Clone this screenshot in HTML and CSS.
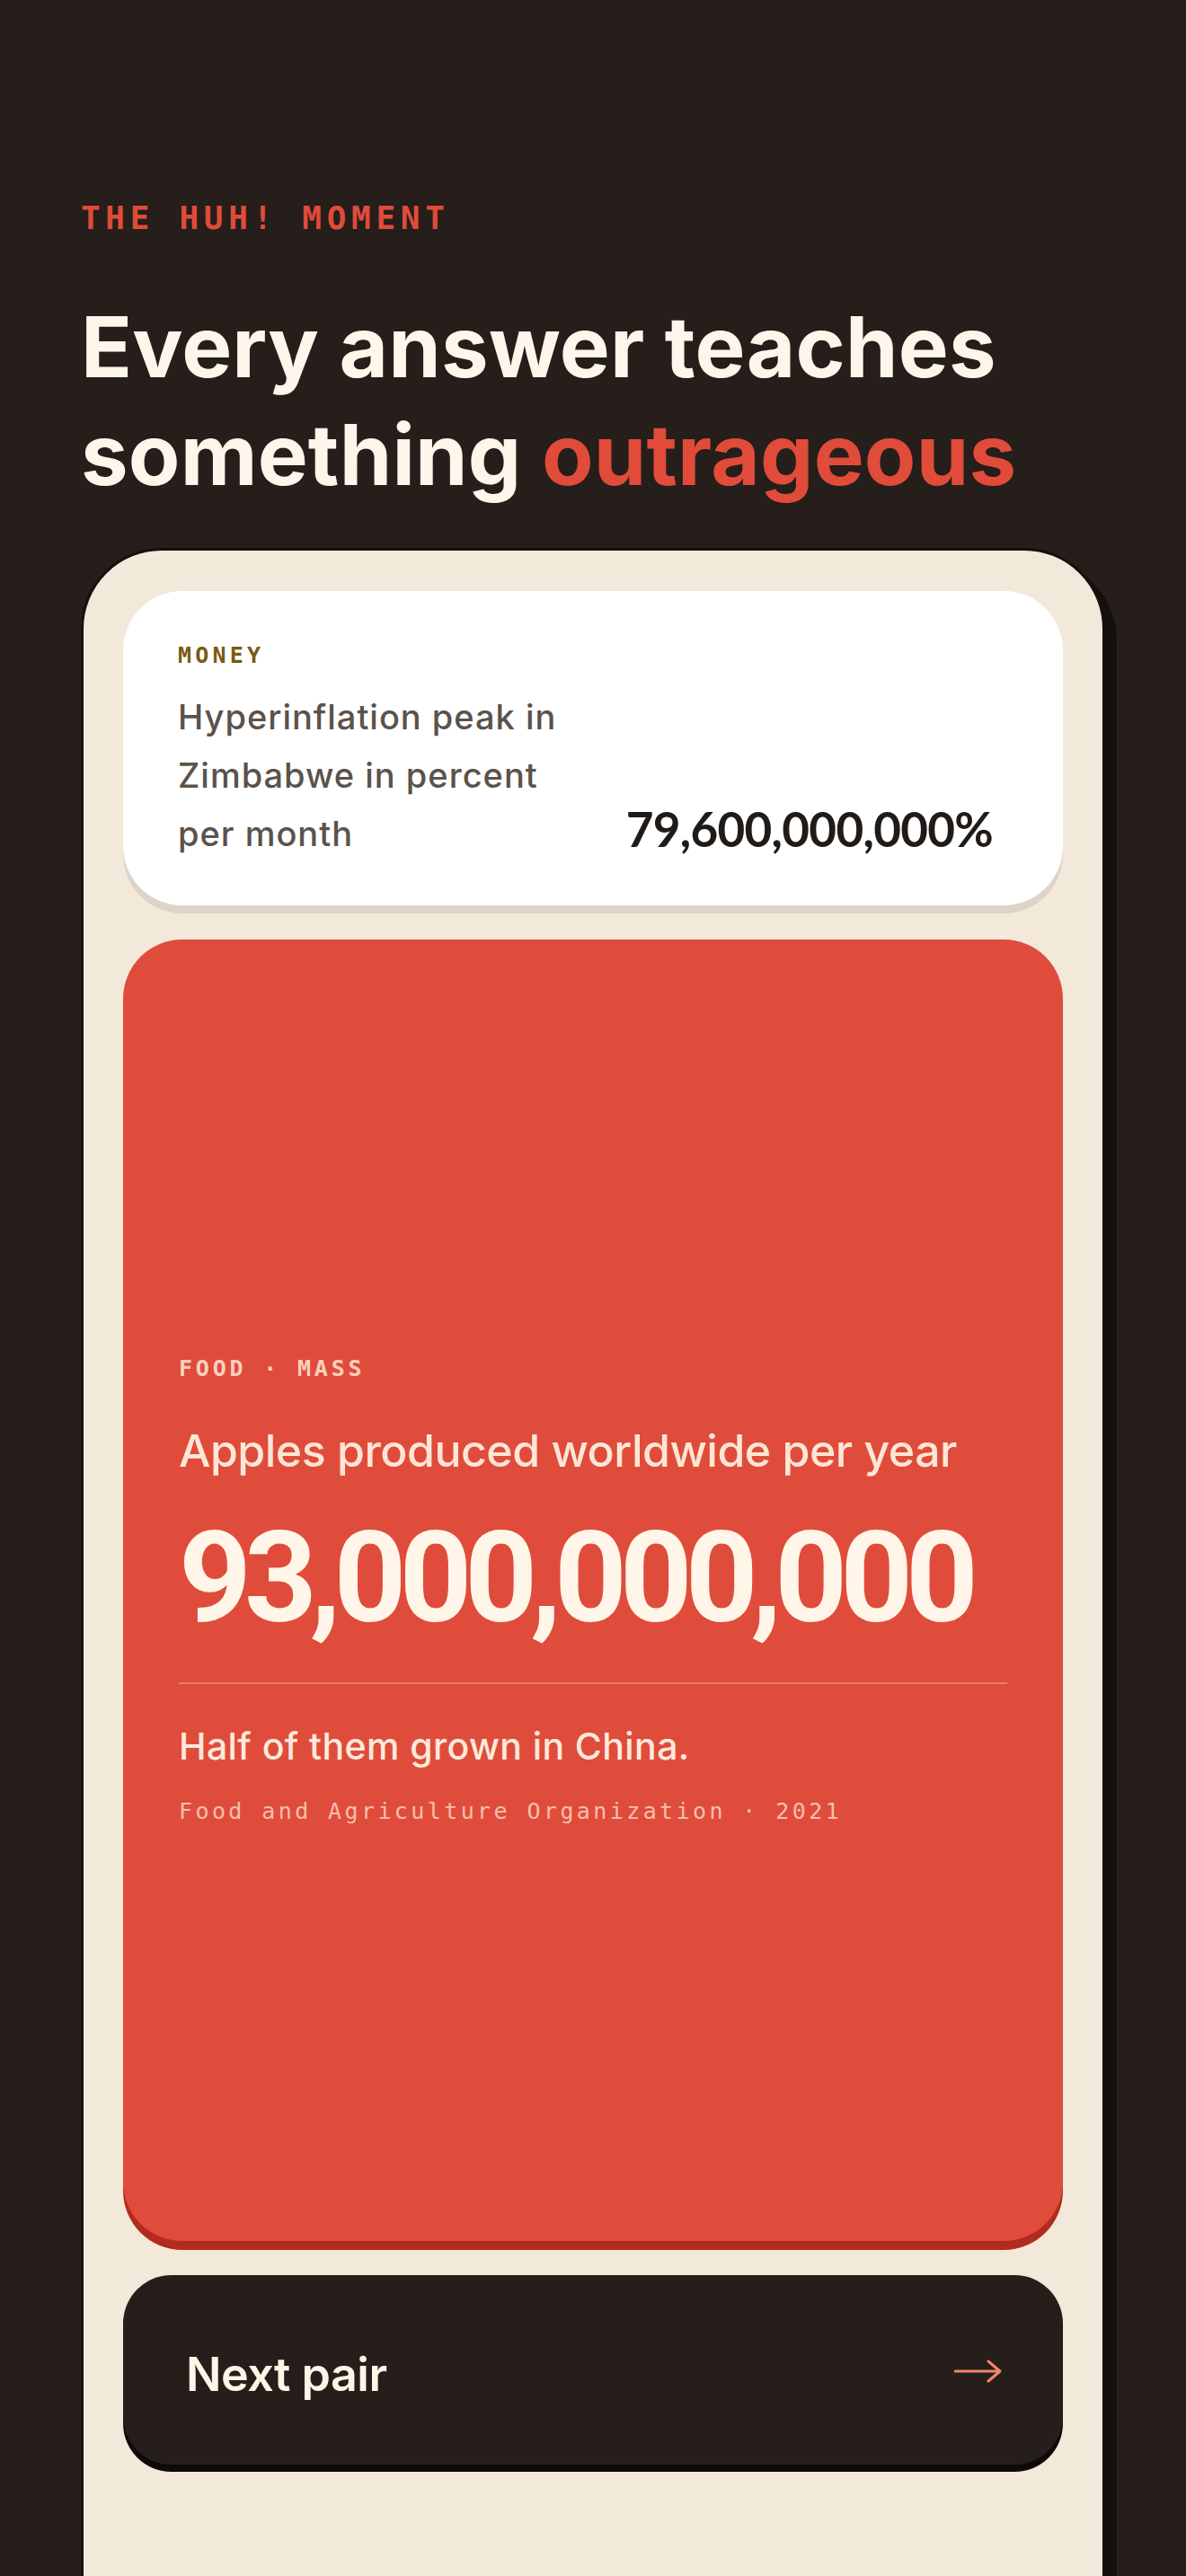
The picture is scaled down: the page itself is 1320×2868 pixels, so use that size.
FILE: index.html
```html
<!DOCTYPE html>
<html lang="en">
<head>
<meta charset="utf-8">
<title>The Huh! Moment</title>
<link rel="stylesheet" href="styles.css">
</head>
<body>
<main class="page">
  <header class="intro">
    <p class="eyebrow">THE HUH! MOMENT</p>
    <h1 class="headline">Every answer teaches<br>something <span class="accent">outrageous</span></h1>
  </header>

  <section class="device">
    <article class="fact-card compare">
      <p class="tag tag-money">MONEY</p>
      <div class="compare-row">
        <p class="compare-label">Hyperinflation peak in Zimbabwe in percent per month</p>
        <p class="compare-value">79,600,000,000%</p>
      </div>
    </article>

    <article class="fact-card hero">
      <p class="tag tag-hero">FOOD · MASS</p>
      <p class="hero-label">Apples produced worldwide per year</p>
      <p class="hero-value">93,000,000,000</p>
      <hr class="hero-rule">
      <p class="hero-note">Half of them grown in China.</p>
      <p class="hero-source">Food and Agriculture Organization · 2021</p>
    </article>

    <button class="next-btn" type="button">
      <span class="next-text">Next pair</span>
      <svg class="next-arrow" width="54" height="26" viewBox="0 0 54 26" aria-hidden="true">
        <path d="M1 13 H51 M38 2 L51 13 L38 24" fill="none" stroke="currentColor" stroke-width="3" stroke-linecap="round" stroke-linejoin="round"/>
      </svg>
    </button>
  </section>
</main>
</body>
</html>
```

FILE: styles.css
```css
html, body {
  margin: 0;
  padding: 0;
  background: #251e1a;
}

body {
  font-family: "Inter", "Liberation Sans", sans-serif;
  color: #fdf6ea;
}

p, h1 {
  margin: 0;
}

.page {
  height: 100vh;
  overflow: hidden;
  padding: 225px 90px 0;
  box-sizing: border-box;
}

.eyebrow {
  font-family: "DejaVu Sans Mono", "Liberation Mono", monospace;
  font-weight: 700;
  font-size: 36px;
  line-height: 36px;
  letter-spacing: 5.7px;
  color: #e04b3a;
}

.headline {
  margin-top: 65px;
  font-size: 94px;
  line-height: 120px;
  font-weight: 700;
  letter-spacing: 0.2px;
  color: #fdf6ea;
}

.accent {
  color: #e04b3a;
}

.device {
  margin-top: 44px;
  background: #f3e9da;
  border: 3px solid #15100c;
  border-radius: 90px;
  box-shadow: 13px 13px 0 #15100c;
  padding: 45px 44px 300px;
  display: flex;
  flex-direction: column;
  gap: 38px;
}

.fact-card {
  border-radius: 66px;
}

.compare {
  background: #ffffff;
  box-shadow: 0 9px 0 #ddd4c7;
  padding: 57px 78px 47px 61px;
}

.tag {
  font-family: "DejaVu Sans Mono", "Liberation Mono", monospace;
  font-weight: 700;
  font-size: 25px;
  line-height: 30px;
  letter-spacing: 4.2px;
}

.tag-money {
  color: #7a5a12;
}

.compare-row {
  margin-top: 21px;
  display: flex;
  justify-content: space-between;
  align-items: flex-end;
}

.compare-label {
  width: 440px;
  font-size: 38px;
  line-height: 65px;
  font-weight: 500;
  letter-spacing: 1px;
  color: #5b524b;
}

.compare-value {
  margin-bottom: 6px;
  font-family: "Lato", "Liberation Sans", sans-serif;
  font-weight: 700;
  font-size: 53px;
  line-height: 64px;
  letter-spacing: -0.7px;
  color: #211b17;
}

.hero {
  background: #e04c3b;
  box-shadow: 0 10px 0 #b22b1f;
  height: 1449px;
  box-sizing: border-box;
  padding: 0 62px;
  display: flex;
  flex-direction: column;
  justify-content: center;
}

.tag-hero {
  color: #f9d0bd;
  letter-spacing: 3.8px;
}

.hero-label {
  margin-top: 46px;
  font-size: 50px;
  line-height: 60px;
  font-weight: 500;
  letter-spacing: -0.5px;
  color: #fde6d6;
}

.hero-value {
  margin-top: 37px;
  font-family: "Roboto", "Inter", sans-serif;
  font-size: 141px;
  line-height: 150px;
  font-weight: 700;
  letter-spacing: -8px;
  color: #fff6e9;
}

.hero-rule {
  margin: 41px 0 0;
  border: 0;
  height: 2px;
  background: #ec7b6a;
}

.hero-note {
  margin-top: 44px;
  font-size: 41px;
  line-height: 50px;
  font-weight: 500;
  letter-spacing: 0.4px;
  color: #fdeadb;
}

.hero-source {
  margin-top: 33px;
  font-family: "DejaVu Sans Mono", "Liberation Mono", monospace;
  font-size: 25px;
  line-height: 30px;
  letter-spacing: 3.4px;
  color: #f7bfad;
}

.next-btn {
  height: 211px;
  border: 0;
  border-radius: 54px;
  background: #251e1a;
  box-shadow: 0 8px 0 #0e0a07;
  padding: 10px 67px 0 70px;
  display: flex;
  justify-content: space-between;
  align-items: center;
  font-family: "Inter", "Liberation Sans", sans-serif;
  cursor: pointer;
}

.next-text {
  font-size: 52px;
  line-height: 52px;
  font-weight: 600;
  letter-spacing: -0.5px;
  color: #fdf5e6;
}

.next-arrow {
  display: block;
  margin-top: -8px;
  color: #f0856d;
}
```
